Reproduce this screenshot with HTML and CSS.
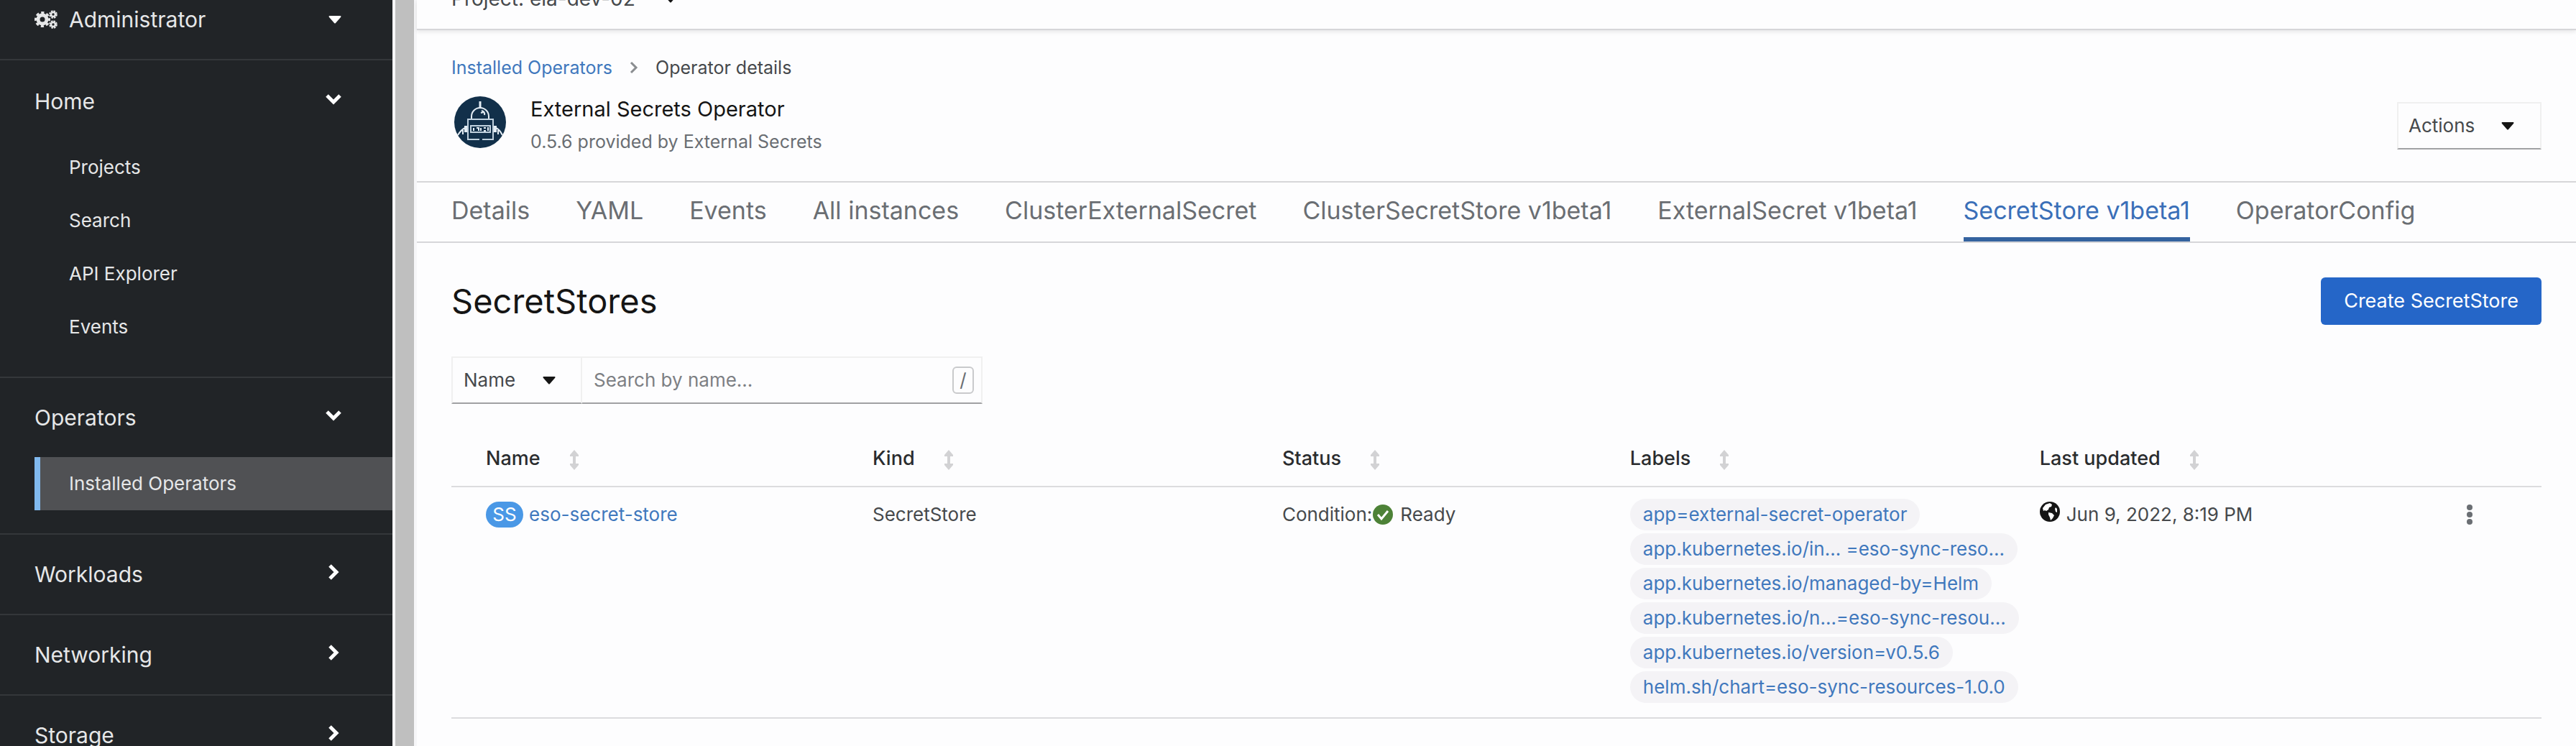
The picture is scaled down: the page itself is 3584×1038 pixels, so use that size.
FILE: index.html
```html
<!DOCTYPE html>
<html lang="en">
<head>
<meta charset="utf-8">
<title>External Secrets Operator · Operator details</title>
<link rel="stylesheet" href="styles.css">
</head>
<body>
<svg class="sprite" aria-hidden="true">
  <symbol id="down" viewBox="0 0 24 16"><path d="M3 3l9 9 9-9" fill="none" stroke="currentColor" stroke-width="5"/></symbol>
  <symbol id="right" viewBox="0 0 16 24"><path d="M3 3l9 9-9 9" fill="none" stroke="currentColor" stroke-width="5"/></symbol>
  <symbol id="caret" viewBox="0 0 18 11"><path d="M1 0h16q1 1 0 2l-7 8q-1 1-2 0L1 2Q0 1 1 0z" fill="currentColor"/></symbol>
  <symbol id="sort" viewBox="0 0 14 28"><path d="M7 0l6 7v2H9v10h4v2l-6 7-6-7v-2h4V9H1V7z" fill="currentColor"/></symbol>
</svg>
<div class="app">
  <nav class="sidebar" aria-label="Main">
    <button class="perspective" type="button">
      <svg class="gears" viewBox="0 0 32 26" aria-hidden="true">
        <circle cx="11" cy="13" r="6" fill="none" stroke="currentColor" stroke-width="5"/>
        <circle cx="11" cy="13" r="9" fill="none" stroke="currentColor" stroke-width="4" stroke-dasharray="4 3.07" stroke-dashoffset="2"/>
        <circle cx="26" cy="6" r="3" fill="none" stroke="currentColor" stroke-width="2.6"/>
        <circle cx="26" cy="6" r="4.8" fill="none" stroke="currentColor" stroke-width="2" stroke-dasharray="2.5 1.27"/>
        <circle cx="26" cy="20" r="3" fill="none" stroke="currentColor" stroke-width="2.6"/>
        <circle cx="26" cy="20" r="4.8" fill="none" stroke="currentColor" stroke-width="2" stroke-dasharray="2.5 1.27"/>
      </svg>
      <span>Administrator</span>
      <svg class="caret" aria-hidden="true"><use href="#caret"/></svg>
    </button>
    <section class="group group-first">
      <button class="group-head" type="button" aria-expanded="true">Home<svg class="chev-down" aria-hidden="true"><use href="#down"/></svg></button>
      <ul>
        <li><a href="#">Projects</a></li>
        <li><a href="#">Search</a></li>
        <li><a href="#">API Explorer</a></li>
        <li><a href="#">Events</a></li>
      </ul>
    </section>
    <section class="group">
      <button class="group-head" type="button" aria-expanded="true">Operators<svg class="chev-down" aria-hidden="true"><use href="#down"/></svg></button>
      <ul>
        <li><a class="current" href="#" aria-current="page">Installed Operators</a></li>
      </ul>
    </section>
    <section class="group"><button class="group-head" type="button">Workloads<svg class="chev-right" aria-hidden="true"><use href="#right"/></svg></button></section>
    <section class="group"><button class="group-head" type="button">Networking<svg class="chev-right" aria-hidden="true"><use href="#right"/></svg></button></section>
    <section class="group"><button class="group-head" type="button">Storage<svg class="chev-right" aria-hidden="true"><use href="#right"/></svg></button></section>
  </nav>
  <div class="scrollbar"></div>
  <main>
    <div class="project-bar">
      <button type="button" class="project">Project: eia-dev-02<svg class="caret" aria-hidden="true"><use href="#caret"/></svg></button>
    </div>
    <header class="page-head">
      <nav class="crumbs" aria-label="Breadcrumb">
        <a href="#">Installed Operators</a>
        <svg class="crumb-sep" aria-hidden="true" viewBox="0 0 12 18"><path d="M2 2l7 7-7 7" fill="none" stroke="currentColor" stroke-width="3"/></svg>
        <span>Operator details</span>
      </nav>
      <div class="operator">
        <svg class="logo" viewBox="0 0 72 72" role="img" aria-label="External Secrets">
          <circle cx="36" cy="36" r="36" fill="#12304a"/>
          <g fill="none" stroke="#e4edf4" stroke-width="2">
            <path d="M36 17V7" stroke-width="3"/>
            <path d="M24 31v-3a12 12 0 0 1 24 0v3"/>
            <path d="M38 20q5 1 4 6M37 23l4-1"/>
            <path d="M35 60H19V32h35v28H39" stroke="#bfd0dd"/>
            <rect x="23" y="41" width="27" height="9" stroke="#bfd0dd"/>
            <path d="M27 44v4M31 44h3v4M37 44v4M41 44h3M41 48h3M47 43v5"/>
            <path d="M16 41v9M57 41v9" stroke-width="4"/>
            <path d="M15 44q-5 2-10 10M12 47v6M58 44q5 2 9 10M61 47v6"/>
          </g>
        </svg>
        <div class="operator-text">
          <h1>External Secrets Operator</h1>
          <p>0.5.6 provided by External Secrets</p>
        </div>
        <button type="button" class="actions">Actions<svg class="caret" aria-hidden="true"><use href="#caret"/></svg></button>
      </div>
    </header>
    <nav class="tabs" aria-label="Operator sections">
      <a href="#">Details</a>
      <a href="#">YAML</a>
      <a href="#">Events</a>
      <a href="#">All instances</a>
      <a href="#">ClusterExternalSecret</a>
      <a href="#">ClusterSecretStore v1beta1</a>
      <a href="#">ExternalSecret v1beta1</a>
      <a class="active" href="#" aria-current="page">SecretStore v1beta1</a>
      <a href="#">OperatorConfig</a>
    </nav>
    <div class="content">
      <div class="title-row">
        <h2>SecretStores</h2>
        <button type="button" class="create">Create SecretStore</button>
      </div>
      <div class="filter">
        <button type="button" class="filter-by">Name<svg class="caret" aria-hidden="true"><use href="#caret"/></svg></button>
        <label class="search">
          <input type="text" placeholder="Search by name..." aria-label="Search by name">
          <kbd>/</kbd>
        </label>
      </div>
      <table>
        <colgroup><col class="c-name"><col class="c-kind"><col class="c-status"><col class="c-labels"><col></colgroup>
        <thead>
          <tr>
            <th scope="col">Name<svg class="sort" aria-hidden="true"><use href="#sort"/></svg></th>
            <th scope="col">Kind<svg class="sort" aria-hidden="true"><use href="#sort"/></svg></th>
            <th scope="col">Status<svg class="sort" aria-hidden="true"><use href="#sort"/></svg></th>
            <th scope="col">Labels<svg class="sort" aria-hidden="true"><use href="#sort"/></svg></th>
            <th scope="col">Last updated<svg class="sort" aria-hidden="true"><use href="#sort"/></svg></th>
          </tr>
        </thead>
        <tbody>
          <tr>
            <td><div class="line"><span class="badge">SS</span><a href="#">eso-secret-store</a></div></td>
            <td><div class="line">SecretStore</div></td>
            <td><div class="line">Condition:<svg class="ok" viewBox="0 0 28 28" aria-hidden="true"><circle cx="14" cy="14" r="14" fill="#4d8237"/><path d="M7 14l5 6 9-11" fill="none" stroke="#fff" stroke-width="3"/></svg>Ready</div></td>
            <td>
              <ul class="labels">
                <li><a href="#">app=external-secret-operator</a></li>
                <li><a href="#">app.kubernetes.io/in... =eso-sync-reso...</a></li>
                <li><a href="#">app.kubernetes.io/managed-by=Helm</a></li>
                <li><a href="#">app.kubernetes.io/n...=eso-sync-resou...</a></li>
                <li><a href="#">app.kubernetes.io/version=v0.5.6</a></li>
                <li><a href="#">helm.sh/chart=eso-sync-resources-1.0.0</a></li>
              </ul>
            </td>
            <td>
              <div class="line">
                <svg class="globe" viewBox="0 0 28 28" aria-hidden="true"><circle cx="14" cy="14" r="14" fill="#151515"/><path d="M4 9l4-5 6-2 3 2-1 3-3 1-1 3-3 2-2-1-2 1zM12 15l5 1 3 3-2 4-3 3-1-4-2-4zM22 8l2 2v5l-2-1-1-4z" fill="#fff"/></svg>
                <span>Jun 9, 2022, 8:19 PM</span>
                <button type="button" class="kebab" aria-label="Row actions"><svg viewBox="0 0 8 28" aria-hidden="true"><circle cx="4" cy="4" r="4"/><circle cx="4" cy="14" r="4"/><circle cx="4" cy="24" r="4"/></svg></button>
              </div>
            </td>
          </tr>
        </tbody>
      </table>
    </div>
  </main>
</div>
</body>
</html>
```
FILE: styles.css
```css
* { box-sizing: border-box; }
body {
  margin: 0;
  height: 100vh;
  overflow: hidden;
  background: #fdfdfe;
  color: #46494c;
  font: 26px/36px Inter, "Liberation Sans", sans-serif;
}
h1, h2, p, ul { margin: 0; padding: 0; font-weight: 400; }
ul { list-style: none; }
a { color: #4078bd; text-decoration: none; }
button {
  margin: 0;
  padding: 0;
  border: 0;
  background: none;
  color: inherit;
  font: inherit;
  text-align: left;
  display: flex;
  align-items: center;
}
svg { flex: none; display: block; }
.sprite { width: 0; height: 0; position: absolute; }
.caret { width: 18px; height: 11px; color: #151515; }

.app { display: flex; height: 100%; }

/* sidebar */
.sidebar {
  flex: none;
  width: 546px;
  overflow: hidden;
  background: #212427;
  color: #e6e7e8;
}
.perspective {
  width: 100%;
  padding: 0 71px 28px 48px;
  font-size: 30px;
  line-height: 54px;
}
.gears { width: 32px; height: 26px; margin-right: 16px; }
.perspective .caret { margin-left: auto; color: #fff; }
.group { border-top: 2px solid #34373a; }
.group-first { padding-top: 2px; }
.group ul { padding-bottom: 32px; }
.group-head {
  width: 100%;
  padding: 0 70px 0 48px;
  font-size: 30px;
  line-height: 110px;
}
.group-head svg { margin-left: auto; margin-bottom: 6px; color: #fff; }
.group-head .chev-down { width: 24px; height: 16px; }
.group-head .chev-right { width: 16px; height: 24px; margin-right: 4px; }
.sidebar li { padding-left: 48px; }
.sidebar li a {
  display: block;
  padding-left: 40px;
  border-left: 8px solid transparent;
  color: #e6e7e8;
  line-height: 74px;
}
.sidebar li .current { background: #505154; border-color: #80b9ee; }

.scrollbar {
  flex: none;
  width: 34px;
  border: solid #f6f6f8;
  border-width: 0 4px;
  background: #bfbfbf;
}

/* page */
main { flex: 1; min-width: 0; }
.project-bar {
  display: flex;
  align-items: flex-start;
  height: 42px;
  padding-left: 48px;
  border-bottom: 2px solid #d6d6d9;
  box-shadow: 0 2px 6px rgba(0, 0, 0, .1);
}
.project { gap: 40px; margin-top: -20px; font-size: 28px; }
.page-head { padding: 34px 48px 30px; }
.crumbs { display: flex; align-items: center; gap: 24px; font-size: 25px; }
.crumb-sep { width: 12px; height: 18px; color: #8a8d90; }
.operator { display: flex; align-items: center; padding-top: 16px; }
.logo { width: 72px; height: 72px; margin: 0 34px 10px 4px; }
.operator-text { flex: 1; padding-top: 4px; }
h1 { color: #151515; font-size: 29px; line-height: 40px; }
.operator-text p { color: #6a6e73; font-size: 25px; line-height: 50px; }
.actions, .filter-by {
  justify-content: space-between;
  border: 2px solid #f0f0f0;
  border-bottom-color: #a0a1a3;
}
.actions { width: 201px; height: 66px; padding: 0 36px 0 14px; }

.tabs {
  display: flex;
  gap: 64px;
  padding: 0 48px;
  border: solid #d6d6d9;
  border-width: 2px 0;
  font-size: 34px;
  line-height: 78px;
}
.tabs a { color: #6a6e73; height: 82px; white-space: nowrap; }
.tabs .active { color: #3a6fb8; border-bottom: 6px solid #35639f; }

.content { padding: 48px 48px 0; }
.title-row { display: flex; justify-content: space-between; align-items: center; }
h2 { color: #151515; font-size: 47px; line-height: 60px; }
.create {
  height: 66px;
  padding: 0 32px;
  border-radius: 6px;
  background: #2566c8;
  color: #fff;
  font-size: 27px;
}
.filter { display: flex; width: 739px; height: 66px; margin-top: 44px; }
.filter-by { width: 182px; padding: 0 35px 0 15px; }
.search {
  flex: 1;
  display: flex;
  align-items: center;
  padding-right: 10px;
  border: 2px solid #f0f0f0;
  border-left: 0;
  border-bottom-color: #a0a1a3;
}
.search input {
  flex: 1;
  min-width: 0;
  padding: 0 16px;
  border: 0;
  outline: 0;
  background: none;
  font: inherit;
}
.search input::placeholder { color: #7d8084; opacity: 1; }
.search kbd {
  width: 30px;
  height: 38px;
  border: 2px solid #c9cacc;
  border-radius: 6px;
  color: #6a6e73;
  font: inherit;
  line-height: 34px;
  text-align: center;
}

/* table */
table { width: 100%; margin-top: 38px; border-collapse: collapse; table-layout: fixed; }
.c-name { width: 20.15%; }
.c-kind { width: 19.6%; }
.c-status { width: 16.64%; }
.c-labels { width: 19.6%; }
th, td { padding: 0; text-align: left; vertical-align: top; }
th:first-child, td:first-child { padding-left: 48px; }
tr { border-bottom: 2px solid #dcdcde; }
th { color: #2a2c2e; font-size: 27px; font-weight: 500; line-height: 76px; }
.sort { display: inline-block; width: 14px; height: 28px; margin-left: 40px; vertical-align: middle; color: #d2d2d4; }
td { height: 322px; padding-top: 16px; }
.line { display: flex; align-items: center; height: 44px; }
.badge {
  width: 52px;
  height: 36px;
  margin-right: 8px;
  border-radius: 18px;
  background: #4a98e6;
  color: #fff;
  text-align: center;
}
.ok { width: 28px; height: 28px; margin: 0 10px 0 1px; }
.labels li { width: fit-content; height: 44px; margin-bottom: 4px; padding: 0 18px; border-radius: 22px; background: #f4f3f6; line-height: 44px; white-space: nowrap; }
.globe { width: 28px; height: 28px; margin: 0 9px 8px 0; }
.kebab { margin: 0 96px 0 auto; }
.kebab svg { width: 8px; height: 28px; fill: #6a6e73; }
```
